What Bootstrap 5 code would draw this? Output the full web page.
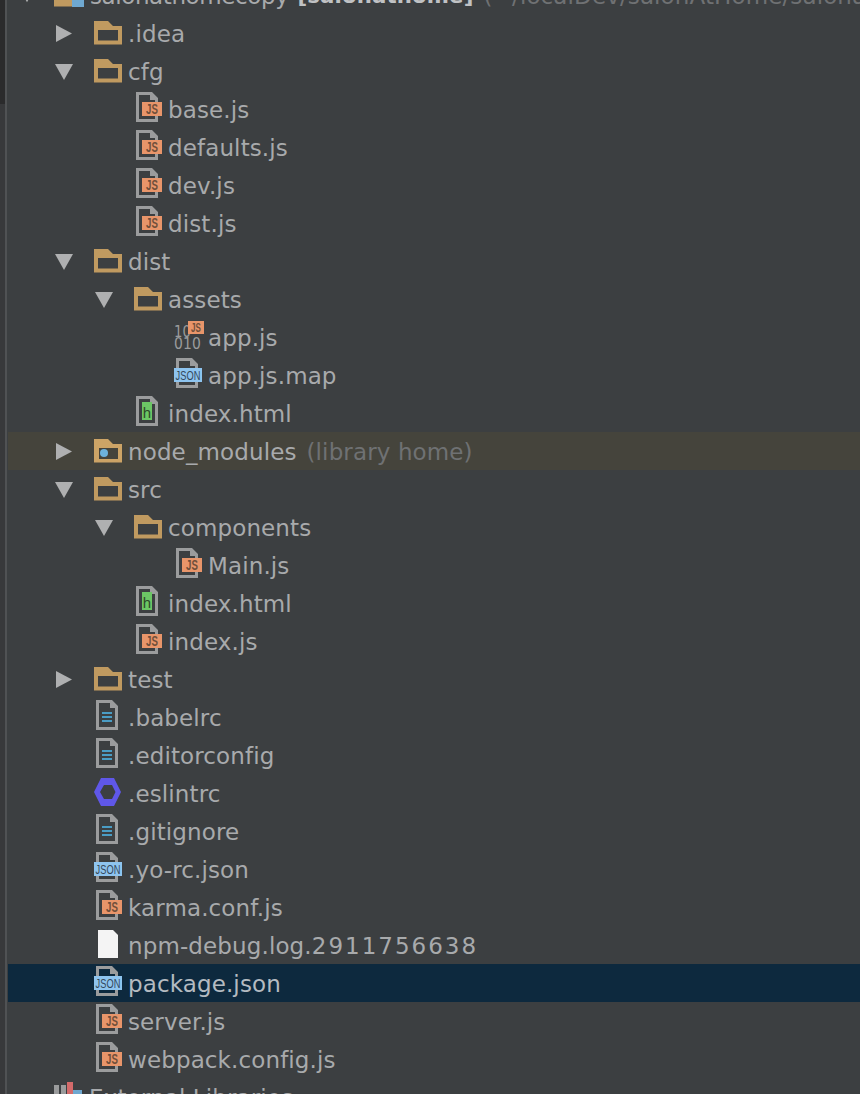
<!DOCTYPE html>
<html lang="en"><head><meta charset="utf-8"><title>Project tree</title>
<link rel="stylesheet" href="https://cdn.jsdelivr.net/npm/bootstrap@5.3.0/dist/css/bootstrap.min.css">
<style>
html,body{height:1094px;overflow:hidden;background:#3c3f41}
.shell{height:1094px;overflow:hidden}
.edge{width:8px;flex:none;background:linear-gradient(#2b2b2c,#2b2b2c) 0 0/5px 104px no-repeat,linear-gradient(to right,#38393b 5px,#505254 5px,#505254 7px,#3c3f41 7px)}
.tree{flex:1;min-width:0;margin-top:-24px;font-family:"DejaVu Sans",sans-serif;font-size:23px;letter-spacing:.12px;color:#a8aaac}
.trow{height:38px;padding-left:46px;padding-top:2px;white-space:nowrap;overflow:hidden}
.trow.d1{padding-left:86px}.trow.d2{padding-left:126px}
.trow.root{padding-left:12px}
.hl{background:#45443c}.sel{background:#0d293e;color:#b4bbc1}
.arrow{width:40px;flex:none;display:flex;padding-left:1px}
.ico{width:28px;height:32px;flex:none;margin-right:6px;overflow:visible}
.ico.rootico{width:32px;margin-right:4px}
.ico.extico{margin-right:7px}
.hint{color:#6f7173;margin-left:10px}
.rootname{color:#c0c2c4;font-weight:700;margin-left:9px;font-size:21.3px}
.rootplain{color:#a8aaac;letter-spacing:-.4px}
.rootarrow{width:34px;flex:none;display:flex}
.wide{letter-spacing:2px}
.lbl{font-family:"Liberation Sans",sans-serif;fill:#6f4f3a}
.jlbl{font-family:"Liberation Sans",sans-serif;fill:#33475a}
.bin{font-family:"DejaVu Sans",sans-serif;fill:#9a9b9c}
</style></head><body>
<svg width="0" height="0" class="d-none" aria-hidden="true">
<defs>
<symbol id="ar" viewBox="0 0 18 18"><path d="M1 0 17 8.500 1 17Z" fill="#afb0b1"/></symbol>
<symbol id="ad" viewBox="0 0 18 18"><path d="M0 1H18L9 17Z" fill="#afb0b1"/></symbol>
<symbol id="folder" viewBox="0 0 28 32" overflow="visible"><path fill-rule="evenodd" d="M0 3H14L19 8H28V26.500H0ZM4 12V22.500H24V12Z" fill="#c09a60"/></symbol>
<symbol id="foldern" viewBox="0 0 28 32" overflow="visible"><path fill-rule="evenodd" d="M0 3H14L19 8H28V26.500H0ZM5 12V23H24V12Z" fill="#cda466"/><circle cx="10" cy="17" r="4" fill="#6db2dc"/></symbol>
<symbol id="page" viewBox="0 0 28 32" overflow="visible"><path fill-rule="evenodd" d="M2-2H18L24 4V28H2ZM5 1V25H21V6H16V1Z" fill="#9b9c9d"/></symbol>
<symbol id="jsf" viewBox="0 0 28 32" overflow="visible"><use href="#page" width="28" height="32"/><rect x="8" y="8" width="20" height="14" fill="#e8956a"/><text x="18" y="20" text-anchor="middle" class="lbl" font-size="14" font-weight="700" textLength="12" lengthAdjust="spacingAndGlyphs">JS</text></symbol>
<symbol id="jsonf" viewBox="0 0 28 32" overflow="visible"><use href="#page" width="28" height="32"/><rect x="0" y="8" width="28" height="14" fill="#8ec4ef"/><text x="14" y="20" text-anchor="middle" class="jlbl" font-size="13" textLength="25" lengthAdjust="spacingAndGlyphs">JSON</text></symbol>
<symbol id="htmlf" viewBox="0 0 28 32" overflow="visible"><use href="#page" width="28" height="32"/><rect x="8" y="4" width="10" height="18" fill="#6cc665"/><text x="13" y="20" text-anchor="middle" class="lbl" font-size="15" style="fill:#2f4a2a">h</text></symbol>
<symbol id="docf" viewBox="0 0 28 32" overflow="visible"><use href="#page" width="28" height="32"/><g fill="#4a9cc4"><rect x="8" y="10" width="10" height="2"/><rect x="8" y="14" width="10" height="2"/><rect x="8" y="18" width="10" height="2"/></g></symbol>
</defs></svg>
<div class="shell d-flex">
<div class="edge"></div>
<div class="tree">

<div class="trow root d-flex align-items-center"><span class="rootarrow"><svg width="14" height="14"><use href="#ad"/></svg></span><svg class="ico rootico"><path d="M0 3H14L19 8H22V26.500H0Z" fill="#c09a60"/><rect x="18" y="14" width="12" height="13" fill="#6fa8d0"/></svg><span class="rootplain">salonathomecopy</span><span class="rootname">[salonathome]</span><span class="hint">(~/localDev/salonAtHome/salonathomecopy)</span></div>

<div class="trow d-flex align-items-center"><span class="arrow"><svg width="18" height="18"><use href="#ar"/></svg></span><svg class="ico"><use href="#folder"/></svg><span>.idea</span></div>
<div class="trow d-flex align-items-center"><span class="arrow"><svg width="18" height="18"><use href="#ad"/></svg></span><svg class="ico"><use href="#folder"/></svg><span>cfg</span></div>
<div class="trow d1 d-flex align-items-center"><span class="arrow"></span><svg class="ico"><use href="#jsf"/></svg><span>base.js</span></div>
<div class="trow d1 d-flex align-items-center"><span class="arrow"></span><svg class="ico"><use href="#jsf"/></svg><span>defaults.js</span></div>
<div class="trow d1 d-flex align-items-center"><span class="arrow"></span><svg class="ico"><use href="#jsf"/></svg><span>dev.js</span></div>
<div class="trow d1 d-flex align-items-center"><span class="arrow"></span><svg class="ico"><use href="#jsf"/></svg><span>dist.js</span></div>
<div class="trow d-flex align-items-center"><span class="arrow"><svg width="18" height="18"><use href="#ad"/></svg></span><svg class="ico"><use href="#folder"/></svg><span>dist</span></div>
<div class="trow d1 d-flex align-items-center"><span class="arrow"><svg width="18" height="18"><use href="#ad"/></svg></span><svg class="ico"><use href="#folder"/></svg><span>assets</span></div>
<div class="trow d2 d-flex align-items-center"><span class="arrow"></span><svg class="ico"><text x="0" y="15" class="bin" font-size="15" textLength="17" lengthAdjust="spacingAndGlyphs">10</text><text x="0" y="27" class="bin" font-size="15" textLength="27" lengthAdjust="spacingAndGlyphs">010</text><rect x="14" y="-1" width="16" height="13" fill="#e8956a"/><text x="22" y="10" text-anchor="middle" class="lbl" font-size="12" font-weight="700" textLength="10" lengthAdjust="spacingAndGlyphs">JS</text></svg><span>app.js</span></div>
<div class="trow d2 d-flex align-items-center"><span class="arrow"></span><svg class="ico"><use href="#jsonf"/></svg><span>app.js.map</span></div>
<div class="trow d1 d-flex align-items-center"><span class="arrow"></span><svg class="ico"><use href="#htmlf"/></svg><span>index.html</span></div>
<div class="trow hl d-flex align-items-center"><span class="arrow"><svg width="18" height="18"><use href="#ar"/></svg></span><svg class="ico"><use href="#foldern"/></svg><span>node_modules</span><span class="hint">(library home)</span></div>
<div class="trow d-flex align-items-center"><span class="arrow"><svg width="18" height="18"><use href="#ad"/></svg></span><svg class="ico"><use href="#folder"/></svg><span>src</span></div>
<div class="trow d1 d-flex align-items-center"><span class="arrow"><svg width="18" height="18"><use href="#ad"/></svg></span><svg class="ico"><use href="#folder"/></svg><span>components</span></div>
<div class="trow d2 d-flex align-items-center"><span class="arrow"></span><svg class="ico"><use href="#jsf"/></svg><span>Main.js</span></div>
<div class="trow d1 d-flex align-items-center"><span class="arrow"></span><svg class="ico"><use href="#htmlf"/></svg><span>index.html</span></div>
<div class="trow d1 d-flex align-items-center"><span class="arrow"></span><svg class="ico"><use href="#jsf"/></svg><span>index.js</span></div>
<div class="trow d-flex align-items-center"><span class="arrow"><svg width="18" height="18"><use href="#ar"/></svg></span><svg class="ico"><use href="#folder"/></svg><span>test</span></div>
<div class="trow d-flex align-items-center"><span class="arrow"></span><svg class="ico"><use href="#docf"/></svg><span>.babelrc</span></div>
<div class="trow d-flex align-items-center"><span class="arrow"></span><svg class="ico"><use href="#docf"/></svg><span>.editorconfig</span></div>
<div class="trow d-flex align-items-center"><span class="arrow"></span><svg class="ico"><path fill-rule="evenodd" d="M7 0H20L27 14 20 28H7L0 14ZM10 7 6 14 10 21H18L21.500 14 18 7Z" fill="#5f57e8"/></svg><span>.eslintrc</span></div>
<div class="trow d-flex align-items-center"><span class="arrow"></span><svg class="ico"><use href="#docf"/></svg><span>.gitignore</span></div>
<div class="trow d-flex align-items-center"><span class="arrow"></span><svg class="ico"><use href="#jsonf"/></svg><span>.yo-rc.json</span></div>
<div class="trow d-flex align-items-center"><span class="arrow"></span><svg class="ico"><use href="#jsf"/></svg><span>karma.conf.js</span></div>
<div class="trow d-flex align-items-center"><span class="arrow"></span><svg class="ico"><path d="M4 0H19L24 5V28H4Z" fill="#f4f4f4"/></svg><span>npm-debug.log.<span class="wide">2911756638</span></span></div>
<div class="trow sel d-flex align-items-center"><span class="arrow"></span><svg class="ico"><use href="#jsonf"/></svg><span>package.json</span></div>
<div class="trow d-flex align-items-center"><span class="arrow"></span><svg class="ico"><use href="#jsf"/></svg><span>server.js</span></div>
<div class="trow d-flex align-items-center"><span class="arrow"></span><svg class="ico"><use href="#jsf"/></svg><span>webpack.config.js</span></div>
<div class="trow d-flex align-items-center"><svg class="ico extico"><g fill="#9a9b9c"><rect x="0" y="3" width="5" height="20"/><rect x="7" y="3" width="5" height="20"/></g><rect x="13" y="0" width="6" height="14" fill="#d46a6a"/><rect x="19" y="8" width="9" height="8" fill="#6fa8d0"/></svg><span>External Libraries</span></div>

</div></div>
<script src="https://cdn.jsdelivr.net/npm/bootstrap@5.3.0/dist/js/bootstrap.bundle.min.js"></script>
</body></html>
